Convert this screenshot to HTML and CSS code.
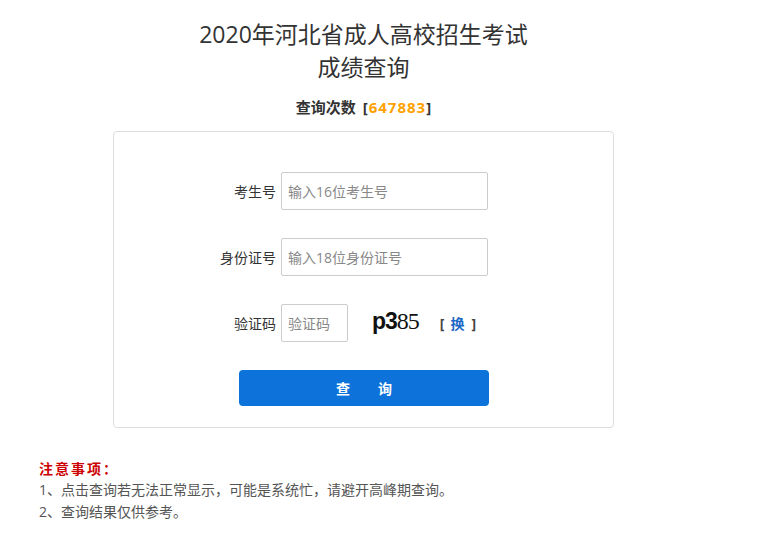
FILE: index.html
```html
<!DOCTYPE html>
<html lang="zh-CN">
<head>
<meta charset="UTF-8">
<meta name="viewport" content="width=device-width, initial-scale=1.0">
<title>成绩查询</title>
<link rel="stylesheet" href="styles.css">
</head>
<body>
    <div class="page">
        <div class="header">
            <h1>2020年河北省成人高校招生考试<br>成绩查询</h1>
            <p class="count">查询次数 [<span>647883</span>]</p>
        </div>

        <div class="card">
            <div class="row">
                <label>考生号</label>
                <input type="text" class="field" placeholder="输入16位考生号">
            </div>
            <div class="row">
                <label>身份证号</label>
                <input type="text" class="field" placeholder="输入18位身份证号">
            </div>
            <div class="row">
                <label>验证码</label>
                <input type="text" class="field code" placeholder="验证码">
                <span class="captcha"><b>p3</b><i>85</i></span>
                <span class="swap">[<a href="#">换</a>]</span>
            </div>
            <div class="actions">
                <button class="submit-btn">查&emsp;&emsp;询</button>
            </div>
        </div>

        <div class="notes">
            <h3>注意事项：</h3>
            <p>1、点击查询若无法正常显示，可能是系统忙，请避开高峰期查询。</p>
            <p>2、查询结果仅供参考。</p>
        </div>
    </div>
</body>
</html>
```

FILE: styles.css
```css
body {
    font-family: "Open Sans", "Noto Sans CJK SC", sans-serif;
    margin: 0;
    padding: 0;
    background-color: #fff;
    color: #333;
}

.page {
    width: 727px;
    padding-top: 18px;
}

.header {
    text-align: center;
}

.header h1 {
    font-size: 23px;
    font-weight: normal;
    line-height: 33px;
    margin: 0;
    color: #333;
}

.count {
    font-size: 15px;
    font-weight: bold;
    margin: 13px 0 14px;
    line-height: 20px;
    word-spacing: 3px;
}

.count span {
    color: #ffa100;
    letter-spacing: 1px;
    padding-left: 1px;
}

.card {
    width: 501px;
    margin: 0 auto;
    box-sizing: border-box;
    border: 1px solid #ddd;
    border-radius: 4px;
    padding: 40px 0 21px;
}

.row {
    display: flex;
    align-items: center;
    height: 38px;
    margin-bottom: 28px;
}

.row label {
    width: 162px;
    text-align: right;
    font-size: 14px;
    color: #333;
    margin-right: 5px;
}

.field {
    width: 207px;
    height: 38px;
    box-sizing: border-box;
    border: 1px solid #ccc;
    border-radius: 2px;
    padding: 0 6px;
    font-family: inherit;
    font-size: 14px;
    color: #333;
    outline: none;
}

.field::placeholder {
    color: #888;
}

.field.code {
    width: 67px;
}

.captcha {
    margin-left: 24px;
    margin-top: -6px;
    font-size: 23px;
    color: #111;
    letter-spacing: -1px;
}

.captcha b {
    font-family: "Liberation Sans", sans-serif;
    font-weight: bold;
}

.captcha i {
    font-family: "Liberation Serif", serif;
    font-style: normal;
    font-size: 24px;
}

.swap {
    margin-left: 21px;
    font-size: 14px;
    font-weight: bold;
    color: #444;
}

.swap a {
    color: #1a66c8;
    text-decoration: none;
    margin: 0 7px 0 6px;
}

.actions {
    display: flex;
    justify-content: center;
    padding-left: 1px;
}

.submit-btn {
    width: 250px;
    height: 36px;
    background-color: #0d72d9;
    color: #fff;
    border: none;
    border-radius: 4px;
    font-family: inherit;
    font-size: 14px;
    font-weight: bold;
    cursor: pointer;
}

.notes {
    padding: 31px 0 0 39px;
    font-size: 14px;
}

.notes h3 {
    margin: 0;
    font-size: 14px;
    color: #cc0000;
    line-height: 20px;
    letter-spacing: 2px;
}

.notes p {
    margin: 0;
    color: #555;
    line-height: 22px;
}
```
